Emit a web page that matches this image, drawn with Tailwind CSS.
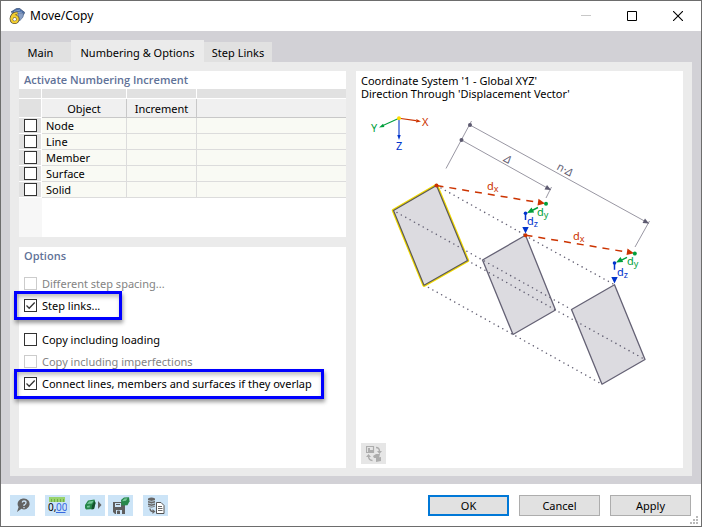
<!DOCTYPE html>
<html lang="en">
<head>
<meta charset="utf-8">
<meta name="viewport" content="width=device-width, initial-scale=1">
<title>Move/Copy</title>
<script src="https://cdn.jsdelivr.net/npm/@tailwindcss/browser@4"></script>
</head>
<body class="flex min-h-screen flex-col border border-[#6d6d6d] bg-white font-['Noto_Sans','Open_Sans',sans-serif] text-[11px] leading-[13px] text-black">
  <header class="flex h-[30px] items-center justify-between pl-2">
    <div class="flex items-center gap-[5px]">
      <svg class="size-4" viewBox="0 0 16 16" aria-hidden="true">
        <path d="M2 4 7.500 .5 10 0 15.800 4.500 14 7.500 9 5.500Z" fill="#4a6ea8" stroke="#46597a" stroke-width=".8"/>
        <path d="M9 5h5.500l-.5 4-3.500 4Z" fill="#8aa0c6" stroke="#536b90" stroke-width=".7"/>
        <path d="M5 3.500 11 2M7 5l6-1" stroke="#9db2d6" stroke-width=".8"/>
        <path d="M8.500 5.200Q3 5 2.300 11" fill="none" stroke="#5c5540" stroke-width="3.400"/>
        <circle cx="5.600" cy="11.200" r="3.200" fill="none" stroke="#5c5540" stroke-width="3.400"/>
        <path d="M8.500 5.200Q3 5 2.400 11" fill="none" stroke="#f5cf2e" stroke-width="2"/>
        <circle cx="5.600" cy="11.200" r="3.100" fill="none" stroke="#f5cf2e" stroke-width="2.100"/>
      </svg>
      <h1 class="text-[12px] leading-4">Move/Copy</h1>
    </div>
    <div class="flex h-full">
      <button class="grid w-[46px] place-items-center" aria-label="Minimize" disabled><svg class="size-[10px]" viewBox="0 0 10 10"><path d="M0 4.500h10" stroke="#c8c8c8"/></svg></button>
      <button class="grid w-[46px] place-items-center" aria-label="Maximize"><svg class="size-[10px]" viewBox="0 0 10 10"><path d="M.5.5h9v9h-9z" fill="none" stroke="#000"/></svg></button>
      <button class="grid w-[46px] place-items-center" aria-label="Close"><svg class="size-[10px]" viewBox="0 0 10 10"><path d="m0 0 10 10M10 0 0 10" stroke="#000" stroke-width="1.100"/></svg></button>
    </div>
  </header>

  <div class="flex grow flex-col bg-[#d2d1d6] px-[9px] pt-[9px] pb-2">
    <nav class="flex items-end" role="tablist">
      <button role="tab" class="h-5 w-[61px] bg-[#e1e1e1]">Main</button>
      <button role="tab" aria-selected="true" class="h-[22px] w-[133px] bg-[#ebebeb] pt-[2px]">Numbering &amp; Options</button>
      <button role="tab" class="h-5 w-[68px] bg-[#e1e1e1]">Step Links</button>
    </nav>
    <main class="grid grow grid-cols-2 gap-[10px] bg-[#ebebeb] px-[9px] pt-[9px] pb-2">
      <div class="flex flex-col gap-[10px]">
        <section class="flex h-[166px] flex-col bg-white">
          <h2 class="h-[18px] pl-[5px] font-['Open_Sans','Noto_Sans',sans-serif] leading-[18px] font-semibold text-[#5f7298]">Activate Numbering Increment</h2>
          <table class="w-full table-fixed border-separate border-spacing-0">
            <colgroup><col class="w-[23px]"><col class="w-[85px]"><col class="w-[70px]"><col></colgroup>
            <thead>
              <tr class="h-[10px] bg-[#e1e1e1]">
                <td class="border-r border-b border-white p-0"></td><td class="border-r border-b border-white p-0"></td><td class="border-r border-b border-white p-0"></td><td class="border-b border-white p-0"></td>
              </tr>
              <tr class="h-[19px] bg-[#f0f0f0]">
                <td class="border-r border-b border-white bg-[#e1e1e1] p-0"></td>
                <th class="border-r border-b border-[#c8c8c8] p-0 font-normal">Object</th>
                <th class="border-r border-b border-[#c8c8c8] p-0 font-normal">Increment</th>
                <td class="border-b border-[#c8c8c8] p-0"></td>
              </tr>
            </thead>
            <tbody class="bg-[#f9faf4]">
              <tr class="h-4"><td class="border-r border-b border-white bg-[#e1e1e1] p-0"><input id="node" type="checkbox" class="ml-[5px] block size-[13px] appearance-none border border-[#333] bg-white"></td><td class="border-r border-b border-[#dcdcdc] p-0 pl-1"><label for="node">Node</label></td><td class="border-r border-b border-[#dcdcdc] p-0"></td><td class="border-b border-[#dcdcdc] p-0"></td></tr>
              <tr class="h-4"><td class="border-r border-b border-white bg-[#e1e1e1] p-0"><input id="line" type="checkbox" class="ml-[5px] block size-[13px] appearance-none border border-[#333] bg-white"></td><td class="border-r border-b border-[#dcdcdc] p-0 pl-1"><label for="line">Line</label></td><td class="border-r border-b border-[#dcdcdc] p-0"></td><td class="border-b border-[#dcdcdc] p-0"></td></tr>
              <tr class="h-4"><td class="border-r border-b border-white bg-[#e1e1e1] p-0"><input id="member" type="checkbox" class="ml-[5px] block size-[13px] appearance-none border border-[#333] bg-white"></td><td class="border-r border-b border-[#dcdcdc] p-0 pl-1"><label for="member">Member</label></td><td class="border-r border-b border-[#dcdcdc] p-0"></td><td class="border-b border-[#dcdcdc] p-0"></td></tr>
              <tr class="h-4"><td class="border-r border-b border-white bg-[#e1e1e1] p-0"><input id="surface" type="checkbox" class="ml-[5px] block size-[13px] appearance-none border border-[#333] bg-white"></td><td class="border-r border-b border-[#dcdcdc] p-0 pl-1"><label for="surface">Surface</label></td><td class="border-r border-b border-[#dcdcdc] p-0"></td><td class="border-b border-[#dcdcdc] p-0"></td></tr>
              <tr class="h-4"><td class="border-r border-b border-white bg-[#e1e1e1] p-0"><input id="solid" type="checkbox" class="ml-[5px] block size-[13px] appearance-none border border-[#333] bg-white"></td><td class="border-r border-b border-[#dcdcdc] p-0 pl-1"><label for="solid">Solid</label></td><td class="border-r border-b border-[#dcdcdc] p-0"></td><td class="border-b border-[#dcdcdc] p-0"></td></tr>
            </tbody>
          </table>
          <div class="w-[23px] grow bg-[#f7f7f7]"></div>
        </section>

        <section class="grow bg-white pl-[5px]">
          <h2 class="h-[18px] font-['Open_Sans','Noto_Sans',sans-serif] leading-[18px] font-semibold text-[#5f7298]">Options</h2>
          <div class="flex flex-col gap-[9px] pt-3">
            <label class="flex items-center gap-[5px] text-[#838383]"><input type="checkbox" disabled class="size-[13px] appearance-none border border-[#ccc] bg-white">Different step spacing...</label>
            <label class="relative flex items-center gap-[5px]">
              <span class="grid"><input type="checkbox" checked class="col-start-1 row-start-1 size-[13px] appearance-none border border-[#333] bg-white"><svg class="col-start-1 row-start-1 size-[13px]" viewBox="0 0 13 13"><path d="m2.500 6.500 2.700 2.700L10.700 3.500" fill="none" stroke="#333" stroke-width="1.300"/></svg></span>Step links...
              <span class="absolute -top-2 -left-[10px] h-[29px] w-[108px] border-3 border-[#0000ff] shadow-[1px_3px_4px_rgba(0,0,0,0.4),inset_1px_3px_4px_rgba(0,0,0,0.25)]"></span>
            </label>
          </div>
          <div class="flex flex-col gap-[9px] pt-[21px]">
            <label class="flex items-center gap-[5px]"><input type="checkbox" class="size-[13px] appearance-none border border-[#333] bg-white">Copy including loading</label>
            <label class="flex items-center gap-[5px] text-[#838383]"><input type="checkbox" disabled class="size-[13px] appearance-none border border-[#ccc] bg-white">Copy including imperfections</label>
            <label class="relative flex items-center gap-[5px]">
              <span class="grid"><input type="checkbox" checked class="col-start-1 row-start-1 size-[13px] appearance-none border border-[#333] bg-white"><svg class="col-start-1 row-start-1 size-[13px]" viewBox="0 0 13 13"><path d="m2.500 6.500 2.700 2.700L10.700 3.500" fill="none" stroke="#333" stroke-width="1.300"/></svg></span>Connect lines, members and surfaces if they overlap
              <span class="absolute -top-2 -left-[10px] h-[30px] w-[310px] border-3 border-[#0000ff] shadow-[1px_3px_4px_rgba(0,0,0,0.4),inset_1px_3px_4px_rgba(0,0,0,0.25)]"></span>
            </label>
          </div>
        </section>
      </div>

      <section class="flex flex-col bg-white">
        <div class="pt-[3px] pl-[5px]"><p>Coordinate System '1 - Global XYZ'</p><p>Direction Through 'Displacement Vector'</p></div>
        <svg class="mt-[5px] h-auto w-full" viewBox="356 105 327 295" role="img" aria-label="Displacement diagram">
          <g fill="#dcdbe0" stroke="#656275" stroke-width="1.300" stroke-linejoin="round">
            <path d="M436.500 185.500 393.500 210.500 424 285.200 467.500 260.500Z" stroke="#f0d800" stroke-width="3.400"/>
            <path d="M436.500 185.500 393.500 210.500 424 285.200 467.500 260.500Z" stroke="#5d5a55" stroke-width="1.200"/>
            <path d="M525.500 235.200 482.500 260 513 334.500 555.500 310Z"/>
            <path d="M614.500 284.700 571.500 309.500 602 384.200 645 359.500Z"/>
          </g>
          <g fill="none" stroke="#656275" stroke-width="1.600" stroke-linecap="round" stroke-dasharray="0 5">
            <path d="M441 188 525.500 235.200"/>
            <path d="M529.500 238 614.500 284.700"/>
            <path d="M397 212.500 482.500 260 571.500 309.500"/>
            <path d="M467.500 260.500 555.500 310 645 359.500"/>
            <path d="M428.500 287.500 513 334.500 602 384.200"/>
          </g>
          <g fill="none" stroke="#9997a3">
            <path d="M471.500 121 446 168.500M470 125l179 98.500M461.500 140l89.500 50M551.500 187l-5.500 11M649.500 221l-14.500 26"/>
          </g>
          <g fill="#5d5a70"><circle cx="470" cy="125" r="2"/><circle cx="461.500" cy="140" r="2"/><path d="m551 190-6.500-.5 2.500-4.500ZM649 223.500l-6.500-.5 2.500-4.500Z"/></g>
          <g stroke="#cc3300" fill="#cc3300">
            <path d="M399 118.300 416 120.600" stroke-width="1.100"/><path d="m421 121.400-5 1.200.4-3.500Z" stroke="none"/>
            <path d="M436.500 185.500 540 202.700M525.500 235.200 629 252.400" stroke-width="1.500" stroke-dasharray="7 6"/>
            <path d="m545 203.500-7.500 1.900 1-6.600ZM634 253.200l-7.500 1.900 1-6.600Z" stroke="none"/>
            <circle cx="436.500" cy="185.500" r="2" stroke="none"/><circle cx="525.500" cy="235.200" r="2" stroke="none"/>
          </g>
          <g stroke="#009f3c" fill="#009f3c">
            <path d="M399 118.300 383 125.500" stroke-width="1.100"/><path d="m379 127.500 4-3.800 1.400 3.200Z" stroke="none"/>
            <path d="m538 207.500-6 3M627 257.300l-6 3" stroke-width="1.500"/>
            <path d="m527 213 4.500-5.500 2.700 4.900ZM616 262.500l4.500-5.500 2.700 4.900Z" stroke="none"/>
            <circle cx="546" cy="203.700" r="2" stroke="none"/><circle cx="634.800" cy="253.500" r="2" stroke="none"/>
          </g>
          <g stroke="#0033cc" fill="#0033cc">
            <path d="M399 118.300V135" stroke-width="1.100"/><path d="m399 140-1.700-5h3.400Z" stroke="none"/>
            <path d="M525.500 213v7M614.500 262.700v7" stroke-width="1.500"/>
            <path d="m525.500 233.500-3.200-6.500h6.400ZM614.500 283.500l-3.200-6.500h6.400Z" stroke="none"/>
            <circle cx="525.500" cy="213.200" r="1.800" stroke="none"/><circle cx="614.500" cy="263" r="1.800" stroke="none"/>
          </g>
          <circle cx="399" cy="118.300" r="2" fill="#ffdc00"/>
          <g font-size="11">
            <g fill="#cc3300"><text x="422" y="126">X</text><text x="487" y="190">d<tspan font-size="9" dy="2">x</tspan></text><text x="573" y="240">d<tspan font-size="9" dy="2">x</tspan></text></g>
            <g fill="#009f3c"><text x="371" y="132">Y</text><text x="537" y="216">d<tspan font-size="9" dy="2">y</tspan></text><text x="627" y="265">d<tspan font-size="9" dy="2">y</tspan></text></g>
            <g fill="#0033cc"><text x="396" y="150">Z</text><text x="527" y="225">d<tspan font-size="9" dy="2">z</tspan></text><text x="617" y="276">d<tspan font-size="9" dy="2">z</tspan></text></g>
            <g fill="#656275"><text transform="translate(503 161) rotate(29)" font-style="italic">Δ</text><text transform="translate(556 169) rotate(29)">n·<tspan font-style="italic">Δ</tspan></text></g>
          </g>
        </svg>
        <button class="mt-auto mb-1 ml-[5px] grid h-[21px] w-[25px] place-items-center bg-[#e6e6e6]" aria-label="Switch image" disabled>
          <svg class="size-4" viewBox="0 0 16 16"><g fill="none" stroke="#adadad"><path d="M.5.5h7v6h-7z" stroke-width="1.200"/><path d="M10 1.500q3.500 0 3.500 4M2.500 9.500q0 5 4 5" stroke-width="1.400"/></g><path d="M2 2h2v2h3v2H2ZM11 5h5l-2.500 3ZM0 11l2.500-3L5 11ZM7 10l3-2h4l-1 4H8ZM10 12l5-1v4l-5 1Z" fill="#adadad"/></svg>
        </button>
      </section>
    </main>
  </div>

  <footer class="relative flex h-[42px] items-center justify-between pr-[10px] pl-[9px]">
    <div class="flex">
      <button class="grid h-[21px] w-[25px] place-items-center bg-[#cce4f7]" aria-label="Help">
        <svg class="size-4" viewBox="0 0 16 16"><path d="M9 1.500a5.500 5.500 0 1 1-2.600 10.300L2 15l1.600-5A5.500 5.500 0 0 1 9 1.500Z" fill="#636363"/><path d="M7.200 5.500Q7.500 4 9 4q2 0 2 1.700Q11 7 9 8v1M9 10v1.300" fill="none" stroke="#cce4f7" stroke-width="1.300"/></svg>
      </button>
      <button class="ml-[10px] grid h-[21px] w-[25px] place-items-center bg-[#cce4f7]" aria-label="Units and decimal places">
        <svg class="h-[17px] w-[19px]" viewBox="0 0 19 17"><path d="M1 0h16v5H1z" fill="#99d36d"/><path d="M3.500 2v3M6.500 2v3M9.500 2v3M12.500 2v3M15.500 2v3" stroke="#70ad47"/><text x="0" y="14" font-size="10">0,</text><text x="8" y="14" font-size="10" fill="#3569df">00</text><path d="M8 15.500h9.500" stroke="#3569df"/></svg>
      </button>
      <button class="ml-[10px] grid h-[21px] w-[25px] place-items-center bg-[#cce4f7]" aria-label="Model display">
        <svg class="h-4 w-[18px]" viewBox="0 0 18 16"><path d="m1 8 3-4.500 6.500-1 1 3.500-1.500 6-8 .5L1 11Z" fill="#26884a"/><path d="m3 7 2-2.500 4.500-.7L8 6.500 3 7ZM3 9l3-.5-.5 2H3Z" fill="#77c69a"/><path d="M8 8.500 7.500 12.500 10 12l1.500-6-1-2Z" fill="#14502c"/><path d="m14 4 3.500 4-3.500 4Z" fill="#666"/></svg>
      </button>
      <button class="ml-[3px] grid h-[21px] w-[25px] place-items-center bg-[#cce4f7]" aria-label="Save as default">
        <svg class="h-[17px] w-[18px]" viewBox="0 0 18 17"><path d="M1 5h9v3h3v9H3l-2-2Z" fill="#5e5e5e"/><path d="M3 6h6v4H3zM4 13h6v4H4z" fill="#cce4f7"/><path d="M4 7.500h4M5.500 14h2v3h-2z" stroke="#5e5e5e" fill="#5e5e5e"/><path d="m9 3 3-2.500 5-.2.500 4-2 4-6 .2Z" fill="#26884a"/><path d="m10.500 3.500 2-2 3-.3-1.500 2.500-3.500.5Z" fill="#77c69a"/></svg>
      </button>
      <button class="ml-[10px] grid h-[21px] w-[25px] place-items-center bg-[#cce4f7]" aria-label="Copy data">
        <svg class="h-[17px] w-[18px]" viewBox="0 0 18 17"><path d="M1 1.500q3.500-2 7 0v8q-3.500 2-7 0Z" fill="#666"/><path d="M1 3.500q3.500 1.800 7 0M1 6q3.500 1.800 7 0M1 8.500q3.500 1.800 7 0" fill="none" stroke="#cce4f7" stroke-width=".8"/><path d="M3 11.500q0 3 3 3" fill="none" stroke="#666" stroke-width="1.300"/><path d="m5.500 12 3 2.500-3 2.500Z" fill="#666"/><path d="M9.500 5.500h4.500l3 3v8H9.500Z" fill="#fff" stroke="#555"/><path d="M11 9.500h4M11 11.500h4.500M11 13.500h4.500" stroke="#555" stroke-width=".9"/></svg>
      </button>
    </div>
    <div class="flex gap-[10px]">
      <button class="h-[21px] w-[81px] border-2 border-[#0078d7] bg-[#e1e1e1]">OK</button>
      <button class="h-[21px] w-[81px] border border-[#adadad] bg-[#e1e1e1]">Cancel</button>
      <button class="h-[21px] w-[81px] border border-[#adadad] bg-[#e1e1e1]">Apply</button>
    </div>
    <svg class="absolute right-[3px] bottom-[2px] size-2" viewBox="0 0 8 8" aria-hidden="true"><path d="M6 0h2v2H6zM3 3h2v2H3zM6 3h2v2H6zM0 6h2v2H0zM3 6h2v2H3zM6 6h2v2H6z" fill="#b9b9b9"/></svg>
  </footer>
</body>
</html>
